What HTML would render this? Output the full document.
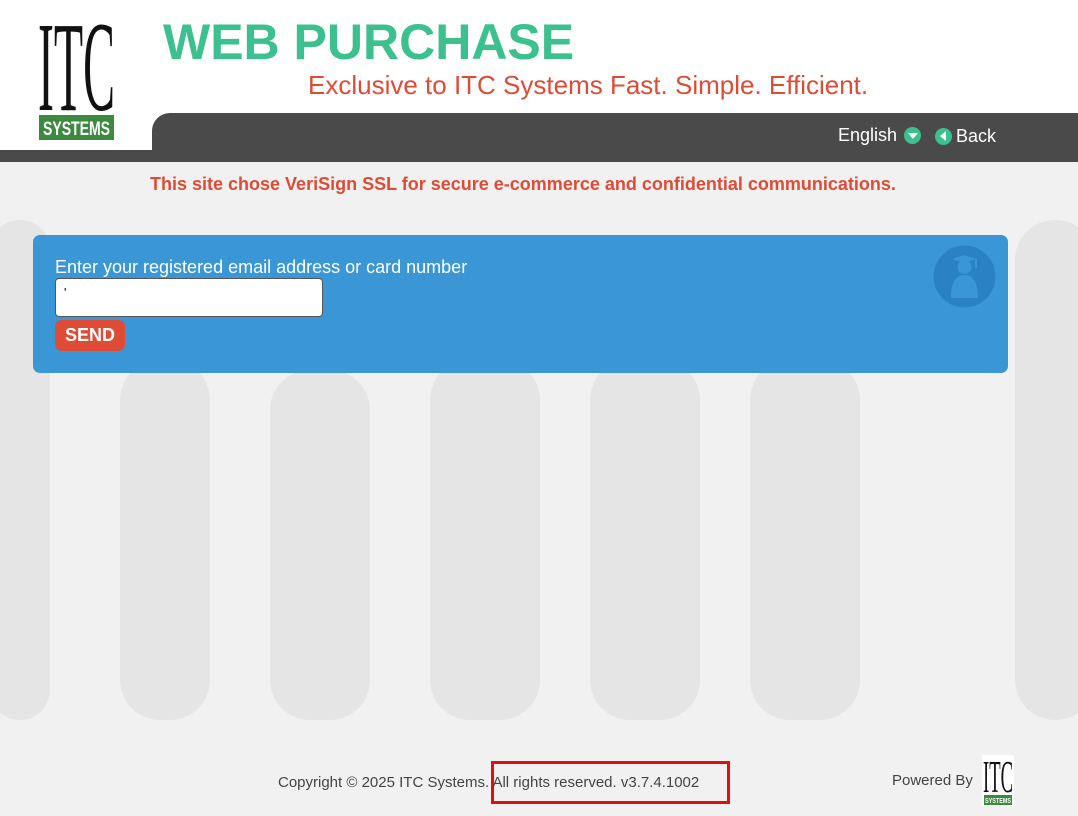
<!DOCTYPE html>
<html><head><meta charset="utf-8"><style>
*{margin:0;padding:0;box-sizing:border-box}
body{width:1078px;height:816px;overflow:hidden;background:#f1f1f1;font-family:"Liberation Sans",sans-serif;position:relative}
.hdr{position:absolute;left:0;top:0;width:1078px;height:162px;background:#fff}
.bar1{position:absolute;left:152px;top:113px;width:926px;height:49px;background:#4a4a4a;border-top-left-radius:18px}
.bar2{position:absolute;left:0;top:150px;width:1078px;height:12px;background:#4a4a4a}
.tab{position:absolute;left:0;top:113px;width:152px;height:37px;background:#fff;border-bottom-right-radius:12px}
.t{position:absolute;white-space:nowrap}
.ppl{position:absolute;background:#e2e2e2;border-radius:40px;opacity:.8}
</style></head><body>
<div class="hdr"></div>
<div class="bar1"></div><div class="bar2"></div><div class="tab"></div>
<svg style="position:absolute;left:37px;top:10px" width="80" height="132" viewBox="0 0 80 132">
<text x="1" y="100" font-family="Liberation Serif" font-size="128" textLength="77" lengthAdjust="spacingAndGlyphs" fill="#111">ITC</text>
<rect x="2" y="105" width="75" height="25" fill="#3c8a3f"/>
<text x="6" y="125" font-family="Liberation Sans" font-weight="bold" font-size="19" textLength="67" lengthAdjust="spacingAndGlyphs" fill="#fff">SYSTEMS</text>
</svg>
<div class="t" style="left:163px;top:13px;font-size:50px;font-weight:bold;color:#3cc08e">WEB PURCHASE</div>
<div class="t" style="left:308px;top:70px;font-size:26px;color:#de4c36">Exclusive to ITC Systems Fast. Simple. Efficient.</div>
<div class="t" style="left:838px;top:125px;font-size:18px;color:#fff">English</div>
<div style="position:absolute;left:904px;top:127px;width:17px;height:17px;border-radius:50%;background:#3cc08e"></div>
<div style="position:absolute;left:908px;top:133px;border-left:5px solid transparent;border-right:5px solid transparent;border-top:6px solid #fff"></div>
<div style="position:absolute;left:935px;top:128px;width:17px;height:17px;border-radius:50%;background:#3cc08e"></div>
<div style="position:absolute;left:940px;top:131px;border-top:5px solid transparent;border-bottom:5px solid transparent;border-right:6px solid #fff"></div>
<div class="t" style="left:956px;top:126px;font-size:18px;color:#fff">Back</div>
<div class="ppl" style="left:-10px;top:220px;width:60px;height:500px"></div>
<div class="ppl" style="left:120px;top:360px;width:90px;height:360px"></div>
<div class="ppl" style="left:270px;top:370px;width:100px;height:350px"></div>
<div class="ppl" style="left:430px;top:360px;width:110px;height:360px"></div>
<div class="ppl" style="left:590px;top:360px;width:110px;height:360px"></div>
<div class="ppl" style="left:750px;top:360px;width:110px;height:360px"></div>
<div class="ppl" style="left:1015px;top:220px;width:80px;height:500px"></div>
<div class="t" style="left:150px;top:174px;font-size:18px;font-weight:bold;color:#de4c36">This site chose VeriSign SSL for secure e-commerce and confidential communications.</div>
<div style="position:absolute;left:33px;top:235px;width:975px;height:138px;background:#3a96d4;border-radius:7px"></div>
<div class="t" style="left:55px;top:257px;font-size:18px;color:#fff">Enter your registered email address or card number</div>
<div style="position:absolute;left:55px;top:278px;width:268px;height:39px;background:#fff;border:1px solid #555;border-radius:4px;font-size:13px;padding:6px 8px">'</div>
<div style="position:absolute;left:55px;top:320px;width:70px;height:31px;background:#de4c36;border-radius:7px;color:#fff;font-weight:bold;font-size:18px;text-align:center;line-height:31px">SEND</div>
<svg style="position:absolute;left:933px;top:245px" width="63" height="63" viewBox="0 0 63 63"><circle cx="31.5" cy="31.5" r="31" fill="#2a82c4"/><path d="M19 14 L31 10 L43 14 L31 18 Z" fill="#3a96d4"/><circle cx="31.5" cy="22" r="7" fill="#3a96d4"/><path d="M18 53 Q18 30 31.5 30 Q45 30 45 53 Z" fill="#3a96d4"/><path d="M43 14 V23" stroke="#3a96d4" stroke-width="2"/></svg>
<div class="t" style="left:278px;top:774px;font-size:15px;color:#444">Copyright © 2025 ITC Systems. All rights reserved. v3.7.4.1002</div>
<div style="position:absolute;left:491px;top:761px;width:239px;height:43px;border:3px solid #e01010"></div>
<div class="t" style="left:892px;top:772px;font-size:15px;color:#444">Powered By</div>
<svg style="position:absolute;left:982px;top:755px" width="32" height="51" viewBox="0 0 32 51">
<rect width="32" height="51" fill="#fff"/>
<text x="1" y="37" font-family="Liberation Serif" font-size="46" textLength="30" lengthAdjust="spacingAndGlyphs" fill="#111">ITC</text>
<rect x="2" y="40" width="28" height="10" fill="#3c8a3f"/>
<text x="3" y="48" font-family="Liberation Sans" font-weight="bold" font-size="7" textLength="26" lengthAdjust="spacingAndGlyphs" fill="#fff">SYSTEMS</text>
</svg>
</body></html>
